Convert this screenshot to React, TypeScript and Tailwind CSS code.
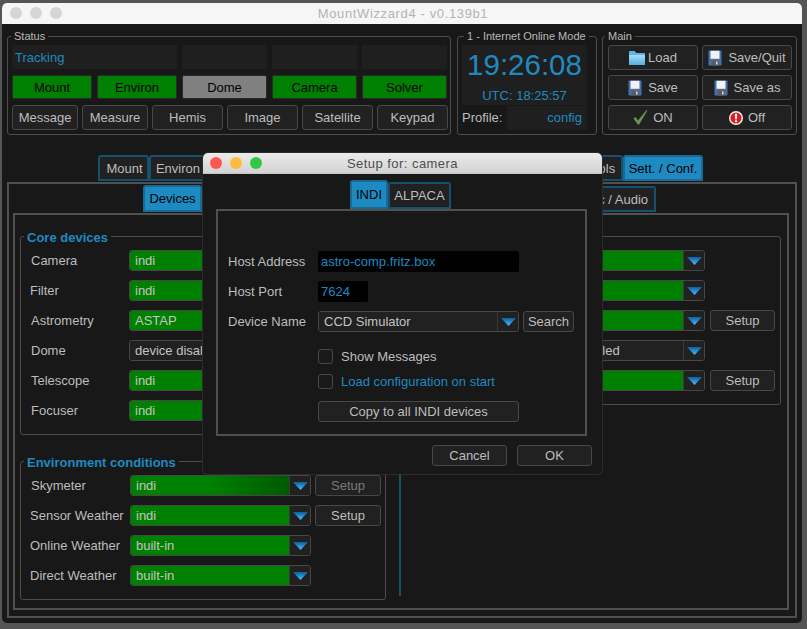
import React from "react";

const Arrow = () => (
  <svg width="15" height="8" viewBox="0 0 15 8">
    <defs>
      <linearGradient id="arr" x1="0" y1="0" x2="0" y2="1">
        <stop offset="0" stopColor="#0f5f99" />
        <stop offset="0.55" stopColor="#2b93dd" />
        <stop offset="1" stopColor="#58bdf5" />
      </linearGradient>
    </defs>
    <polygon points="0,0 15,0 7.5,8" fill="url(#arr)" />
  </svg>
);

const Floppy = () => (
  <svg width="14" height="16" viewBox="0 0 14 16" className="shrink-0">
    <path d="M0.5 1.5 Q0.5 0.5 1.5 0.5 H12.5 Q13.5 0.5 13.5 1.5 V14.5 Q13.5 15.5 12.5 15.5 H1.5 Q0.5 15.5 0.5 14.5 Z" fill="#4a6ea8" stroke="#2f4d80" strokeWidth="0.6" />
    <rect x="2.5" y="0.8" width="9" height="8" fill="#f2f2f2" />
    <rect x="3.5" y="10.5" width="7.5" height="5" fill="#5c5c5c" />
    <rect x="8" y="11.5" width="1.6" height="3" fill="#d8d8d8" />
  </svg>
);

const Folder = () => (
  <svg width="16" height="14" viewBox="0 0 16 14" className="shrink-0">
    <defs>
      <linearGradient id="fold" x1="0" y1="0" x2="0" y2="1">
        <stop offset="0" stopColor="#a9dcf5" />
        <stop offset="1" stopColor="#4fb0e2" />
      </linearGradient>
    </defs>
    <path d="M0 1 Q0 0 1 0 H5.5 L7.5 2 H15 Q16 2 16 3 V13 Q16 14 15 14 H1 Q0 14 0 13 Z" fill="#5fb4e0" />
    <rect x="0" y="4" width="16" height="10" rx="0.8" fill="url(#fold)" />
  </svg>
);

const Check = () => (
  <svg width="15" height="15" viewBox="0 0 15 15" className="shrink-0">
    <polygon points="0.5,8.5 2.5,7 5,10.5 13.5,0 14.3,0.5 6.2,14.5 4.8,14.5" fill="#6d9156" />
  </svg>
);

const ErrIcon = () => (
  <svg width="14" height="14" viewBox="0 0 14 14" className="shrink-0">
    <circle cx="7" cy="7" r="7" fill="#f2f2f2" />
    <circle cx="7" cy="7" r="5.6" fill="#d92020" />
    <rect x="6" y="2.8" width="2" height="5.4" fill="#ffffff" />
    <rect x="6" y="9.2" width="2" height="2" fill="#ffffff" />
  </svg>
);

const Lights = ({ on }: { on: boolean }) => (
  <div className="flex gap-[8px]">
    <div className={`w-[12px] h-[12px] rounded-full ${on ? "bg-[#fc5753]" : "bg-[#d6d6d6]"}`} />
    <div className={`w-[12px] h-[12px] rounded-full ${on ? "bg-[#fdbc40]" : "bg-[#d6d6d6]"}`} />
    <div className={`w-[12px] h-[12px] rounded-full ${on ? "bg-[#33c748]" : "bg-[#d6d6d6]"}`} />
  </div>
);

const Group = ({ title, blue, lx = "left-[3px]", className, children }: { title: string; blue?: boolean; lx?: string; className: string; children?: React.ReactNode }) => (
  <div className={`relative border border-[#4c4c4c] rounded-[3px] ${className}`}>
    {title && (
      <span className={`absolute px-[3px] bg-[#181818] whitespace-nowrap leading-[14px] ${lx} ${blue ? "top-[-6px] text-[#1f8ac0] font-bold text-[13px]" : "top-[-8px] text-[11px] text-[#b8b8b8]"}`}>
        {title}
      </span>
    )}
    {children}
  </div>
);

const Btn = ({ className, children, dim }: { className: string; children?: React.ReactNode; dim?: boolean }) => (
  <div className={`flex items-center justify-center shrink-0 border border-[#474747] rounded-[3px] bg-[#212121] ${dim ? "text-[#7a7a7a]" : "text-[#bdbdbd]"} ${className}`}>
    {children}
  </div>
);

const Led = ({ className, gray, children }: { className: string; gray?: boolean; children: React.ReactNode }) => (
  <div className={`h-[24px] shrink-0 flex items-center justify-center rounded-[2px] text-black border border-[#2a2a2a] ${gray ? "bg-[#808080]" : "bg-[#008000]"} ${className}`}>{children}</div>
);

const Combo = ({ text, green, w, dark }: { text: string; green?: boolean; w: string; dark?: boolean }) => (
  <div className={`flex h-[21px] shrink-0 border border-[#474747] rounded-[3px] overflow-hidden ${w}`}>
    <div className={`flex-1 flex items-center pl-[5px] min-w-0 whitespace-nowrap overflow-hidden ${green ? (dark ? "bg-gradient-to-r from-[#008000] via-[#008000] to-[#005a00]" : "bg-[#008000]") : "bg-[#212121]"} text-[#c4c4c4]`}>
      {text}
    </div>
    <div className="w-[21px] shrink-0 flex items-center justify-center bg-[#212121] border-l border-[#3a3a3a]">
      <Arrow />
    </div>
  </div>
);

const Row = ({ label, combo, setup, dim, dark, green = true, lw = "w-[108px]", lp = "pl-[10px]" }: { label: string; combo: string; setup?: boolean; dim?: boolean; dark?: boolean; green?: boolean; lw?: string; lp?: string }) => (
  <div className="flex items-center h-[21px]">
    <div className={`shrink-0 text-[#bdbdbd] whitespace-nowrap ${lw} ${lp}`}>{label}</div>
    <Combo text={combo} green={green} w="w-[181px]" dark={dark} />
    {setup && <Btn dim={dim} className="w-[66px] h-[21px] ml-[4px]">Setup</Btn>}
  </div>
);

const RightRow = ({ combo, setup, green = true }: { combo: string; setup?: boolean; green?: boolean }) => (
  <div className="flex items-center h-[21px]">
    <Combo text={combo} green={green} w="w-[181px]" />
    {setup && <Btn className="w-[65px] h-[21px] ml-[5px]">Setup</Btn>}
  </div>
);

const Tab = ({ w, active, className = "", children }: { w: string; active?: boolean; className?: string; children?: React.ReactNode }) => (
  <div className={`flex items-center justify-center shrink-0 border-2 rounded-t-[3px] whitespace-nowrap ${active ? "bg-[#1d8bc2] text-black border-[#176b94]" : "bg-[#212121] text-[#bdbdbd] border-[#15506e]"} ${w} ${className}`}>
    {children}
  </div>
);

export default function App() {
  return (
    <div className="relative w-[807px] h-[629px] overflow-hidden bg-[#555555] pt-[3px] pl-[2px] text-[13px] leading-none" style={{ fontFamily: '"Liberation Sans", Arial, sans-serif' }}>
      <div className="w-[800px] h-[620px] rounded-[5px] overflow-hidden bg-[#181818] flex flex-col">
        {/* title bar */}
        <div className="relative h-[21px] shrink-0 bg-[#f6f6f6] flex items-center justify-center pl-[2px] text-[#b4b4b4] tracking-[0.63px]">
          <div className="absolute left-[8px] top-[4px]"><Lights on={false} /></div>
          MountWizzard4 - v0.139b1
        </div>

        {/* top groups */}
        <div className="flex mt-[12px] ml-[5px] h-[99px] shrink-0">
          <Group title="Status" className="w-[444px] pl-[4px] pt-[8px]">
            <div className="flex gap-[5px] h-[24px] text-[#1f8ac0]">
              <div className="w-[165px] shrink-0 bg-[#1f1f1f] flex items-center pl-[3px] text-[13px]">Tracking</div>
              <div className="w-[85px] shrink-0 bg-[#1f1f1f]" />
              <div className="w-[85px] shrink-0 bg-[#1f1f1f]" />
              <div className="w-[85px] shrink-0 bg-[#1f1f1f]" />
            </div>
            <div className="flex gap-[5px] mt-[6px]">
              <Led className="w-[80px]">Mount</Led>
              <Led className="w-[80px]">Environ</Led>
              <Led gray className="w-[85px]">Dome</Led>
              <Led className="w-[85px]">Camera</Led>
              <Led className="w-[85px]">Solver</Led>
            </div>
            <div className="flex gap-[4px] mt-[6px]">
              <Btn className="w-[66px] h-[25px]">Message</Btn>
              <Btn className="w-[66px] h-[25px]">Measure</Btn>
              <Btn className="w-[71px] h-[25px]">Hemis</Btn>
              <Btn className="w-[71px] h-[25px]">Image</Btn>
              <Btn className="w-[71px] h-[25px]">Satellite</Btn>
              <Btn className="w-[71px] h-[25px]">Keypad</Btn>
            </div>
          </Group>

          <Group title="1 - Internet Online Mode" lx="left-[6px]" className="w-[140px] ml-[6px] pl-[4px] pt-[8px]">
            <div className="w-[125px] h-[60px] bg-[#1f1f1f] flex flex-col items-center text-[#1f8ac0]">
              <div className="text-[29.5px] leading-none mt-[5px]">19:26:08</div>
              <div className="mt-[9px]">UTC: 18:25:57</div>
            </div>
            <div className="flex items-center h-[25px]">
              <span className="text-[#bdbdbd] w-[45px] shrink-0">Profile:</span>
              <div className="w-[80px] h-[24px] bg-[#1f1f1f] flex items-center justify-end text-[#1f8ac0] pr-[5px]">config</div>
            </div>
          </Group>

          <Group title="Main" lx="left-[2px]" className="w-[195px] ml-[5px] pl-[5px] pt-[8px]">
            <div className="grid grid-cols-[90px_90px] gap-x-[4px] gap-y-[5px]">
              <Btn className="h-[25px] gap-[3px]"><Folder />Load</Btn>
              <Btn className="h-[25px] gap-[6px]"><Floppy />Save/Quit</Btn>
              <Btn className="h-[25px] gap-[6px]"><Floppy />Save</Btn>
              <Btn className="h-[25px] gap-[6px]"><Floppy />Save as</Btn>
              <Btn className="h-[25px] gap-[5px]"><Check />ON</Btn>
              <Btn className="h-[25px] gap-[5px]"><ErrIcon />Off</Btn>
            </div>
          </Group>
        </div>

        {/* main tabs */}
        <div className="flex mt-[20px] ml-[96px] h-[26px] shrink-0">
          <Tab w="w-[51px]" className="pl-[2px]">Mount</Tab>
          <Tab w="w-[58px]">Environ</Tab>
          <Tab w="w-[364px]" />
          <Tab w="w-[52px]" className="pl-[6px]">Tools</Tab>
          <Tab w="w-[80px]" active>Sett. / Conf.</Tab>
        </div>

        {/* outer pane */}
        <div className="ml-[5px] mt-[1px] w-[790px] h-[436px] border-2 border-[#505050] shrink-0 flex flex-col">
          <div className="flex ml-[134px] h-[27px] mt-[1px] shrink-0">
            <Tab w="w-[59px]" active className="pb-[1px]">Devices</Tab>
            <Tab w="w-[368px]" />
            <Tab w="w-[86px]" className="mt-[1px]">Misc / Audio</Tab>
          </div>
          {/* inner pane */}
          <div className="ml-[4px] mt-[1px] w-[776px] h-[397px] border-2 border-[#505050] flex pl-[5px] pt-[21px]">
            <div className="w-[366px] shrink-0 flex flex-col">
              <Group title="Core devices" blue className="h-[199px] pt-[13px] flex flex-col gap-[9px]">
                <Row label="Camera" combo="indi" />
                <Row label="Filter" combo="indi" lp="pl-[9px]" />
                <Row label="Astrometry" combo="ASTAP" />
                <Row label="Dome" combo="device disabled" green={false} />
                <Row label="Telescope" combo="indi" />
                <Row label="Focuser" combo="indi" />
              </Group>
              <Group title="Environment conditions" blue className="h-[139px] mt-[26px] pt-[13px] flex flex-col gap-[9px]">
                <Row label="Skymeter" combo="indi" setup dim dark lw="w-[109px]" />
                <Row label="Sensor Weather" combo="indi" setup lw="w-[109px]" lp="pl-[9px]" />
                <Row label="Online Weather" combo="built-in" lw="w-[109px]" lp="pl-[9px]" />
                <Row label="Direct Weather" combo="built-in" lw="w-[109px]" lp="pl-[9px]" />
              </Group>
            </div>
            <div className="w-[381px] ml-[14px] shrink-0 flex flex-col">
              <Group title="" className="h-[169px] pt-[13px] pl-[123px] flex flex-col gap-[9px]">
                <RightRow combo="" />
                <RightRow combo="" />
                <RightRow combo="" setup />
                <RightRow combo="device disabled" green={false} />
                <RightRow combo="" setup />
              </Group>
              <div className="w-[2px] h-[126px] mt-[65px] -ml-px bg-[#15506e]" />
            </div>
          </div>
        </div>
      </div>

      {/* dialog window */}
      <div className="absolute left-[203px] top-[153px] w-[399px] h-[321px] rounded-[5px] overflow-hidden bg-[#181818] flex flex-col shadow-[0_0_0_1px_#2c2c2c]">
        <div className="h-[21px] shrink-0 relative bg-gradient-to-b from-[#ebebeb] to-[#d3d3d3] border-b border-[#c4c4c4] flex items-center justify-center pt-[1px] text-[#4e4e4e] tracking-[0.45px]">
          <div className="absolute left-[7px] top-[4px]"><Lights on /></div>
          Setup for: camera
        </div>
        <div className="flex ml-[147px] h-[29px] mt-[6px] shrink-0">
          <Tab w="w-[38px]" active>INDI</Tab>
          <Tab w="w-[63px]" className="mt-[2px]">ALPACA</Tab>
        </div>
        <div className="ml-[13px] w-[371px] h-[227px] border-2 border-[#505050] shrink-0 pl-[10px] pt-[40px] text-[#bdbdbd]">
          <div className="flex items-center h-[21px]">
            <div className="w-[90px]">Host Address</div>
            <div className="w-[201px] h-[21px] bg-black rounded-[2px] flex items-center pl-[3px] text-[#1f8ac0]">astro-comp.fritz.box</div>
          </div>
          <div className="flex items-center h-[21px] mt-[9px]">
            <div className="w-[90px]">Host Port</div>
            <div className="w-[50px] h-[21px] bg-black rounded-[2px] flex items-center pl-[3px] text-[#1f8ac0]">7624</div>
          </div>
          <div className="flex items-center h-[21px] mt-[9px]">
            <div className="w-[90px]">Device Name</div>
            <Combo text="CCD Simulator" w="w-[201px]" />
            <Btn className="w-[51px] h-[21px] ml-[4px]">Search</Btn>
          </div>
          <div className="flex items-center h-[15px] mt-[17px] ml-[90px]">
            <div className="w-[15px] h-[15px] border border-[#474747] rounded-[3px] bg-[#1a1a1a]" />
            <span className="ml-[8px]">Show Messages</span>
          </div>
          <div className="flex items-center h-[15px] mt-[10px] ml-[90px]">
            <div className="w-[15px] h-[15px] border border-[#474747] rounded-[3px] bg-[#1a1a1a]" />
            <span className="ml-[8px] text-[#1f8ac0]">Load configuration on start</span>
          </div>
          <Btn className="w-[201px] h-[21px] mt-[12px] ml-[90px]">Copy to all INDI devices</Btn>
        </div>
        <div className="flex mt-[9px] ml-[229px] gap-[10px]">
          <Btn className="w-[75px] h-[21px]">Cancel</Btn>
          <Btn className="w-[75px] h-[21px]">OK</Btn>
        </div>
      </div>
    </div>
  );
}
